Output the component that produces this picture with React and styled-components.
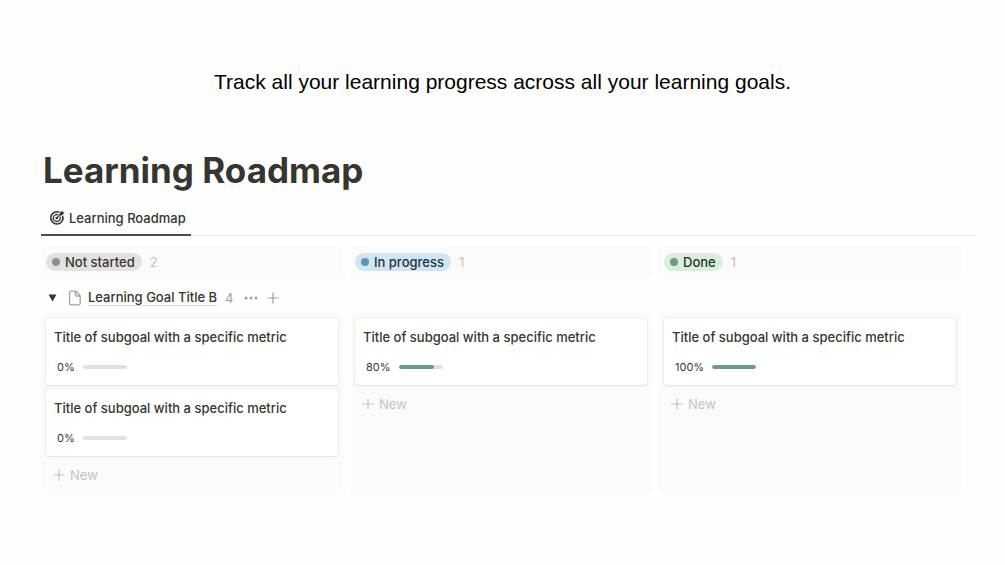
import React from "react";
import styled, { createGlobalStyle } from "styled-components";

const theme = {
  ink: "#37352f",
  muted: "#a3a29f",
  faint: "#c4c3c1",
  track: "#e3e2e0",
  column: "#fbfbfa",
  green: "#6c9b7d",
};

const GlobalStyle = createGlobalStyle`
* { box-sizing:border-box; }
body {
  margin:0;
  background:#fefefe;
  color:${theme.ink};
  font-family:Inter, "Liberation Sans", sans-serif;
  font-size:13px;
  line-height:20px;
}
button {
  font:inherit;
  color:inherit;
  background:none;
  border:0;
  padding:0;
  cursor:pointer;
}
`;

const Page = styled.main`
padding:66px 29px 66px 41px;
`;

const Intro = styled.p`
margin:0 0 50px;
padding-right:12px;
font-family:"Liberation Sans", Arial, sans-serif;
font-size:21px;
line-height:32px;
text-align:center;
color:#000;
`;

const Title = styled.h1`
margin:0 0 9px;
padding-left:2px;
font-size:35px;
line-height:44px;
font-weight:700;
`;

const Tabs = styled.div`
display:flex;
height:35px;
margin-bottom:10px;
border-bottom:1px solid #ececeb;
`;

const Tab = styled.button`
display:flex;
align-items:center;
gap:4px;
height:35px;
padding:0 5px 0 8px;
border-bottom:2px solid #4d4b44;
font-weight:500;
`;

const Board = styled.div`
padding-right:15px;
`;

const Columns = styled.div`
display:grid;
grid-template-columns:repeat(3, 1fr);
gap:7px;
`;

const ColumnHeader = styled.div`
display:flex;
align-items:center;
gap:8px;
height:32px;
padding:0 5px;
background:${theme.column};
border-radius:3px;
color:${theme.faint};
`;

const Status = styled.h2`
display:flex;
align-items:center;
gap:5px;
height:18px;
margin:0;
padding:0 7px 0 6px;
border-radius:9px;
font-size:13px;
line-height:18px;
font-weight:500;
background:${(props) => props.$background};
color:${(props) => props.$color};

&::before{
  content:"";
  width:8px;
  height:8px;
  border-radius:50%;
  background:${(props) => props.$dot};
}
`;

const Group = styled.div`
display:flex;
align-items:center;
height:35px;
padding:4px 7px 0;
color:${theme.muted};
`;

const GroupLink = styled.a`
margin:0 8px 0 5px;
border-bottom:1px solid #dcdbd9;
color:${theme.ink};
font-weight:500;
line-height:16px;
text-decoration:none;
`;

const IconButton = styled.button`
display:flex;
margin-left:${(props) => props.$space}px;
`;

const Toggle = styled(IconButton)`
margin-right:10px;
color:${theme.ink};
`;

const Column = styled.section`
display:flex;
flex-direction:column;
padding:5px 5px 0;
background:${theme.column};
`;

const Card = styled.article`
padding:9px 8px 8px;
margin-bottom:4px;
background:#fff;
border-radius:3px;
box-shadow:0 0 0 1px rgba(15, 15, 15, 0.04), 0 1px 3px rgba(15, 15, 15, 0.08);

&:last-of-type{
  margin-bottom:0;
}
`;

const CardTitle = styled.h3`
margin:0 0 10px;
font-size:13px;
line-height:20px;
font-weight:500;
`;

const Progress = styled.div`
display:flex;
align-items:center;
gap:8px;
padding-left:3px;
font-size:11px;
line-height:20px;
`;

const Track = styled.div`
width:44px;
height:4px;
border-radius:2px;
background:${theme.track};
overflow:hidden;
`;

const Fill = styled.div`
height:100%;
border-radius:2px;
background:${theme.green};
`;

const NewButton = styled.button`
display:flex;
align-items:center;
gap:5px;
height:37px;
padding:0 7px;
color:${theme.faint};
`;

const columns = [
  { name: "Not started", background: "#e3e2e0", color: "#37352f", dot: "#91918e", cards: [0, 0] },
  { name: "In progress", background: "#d3e5ef", color: "#183347", dot: "#5b97bd", cards: [80] },
  { name: "Done", background: "#dbeddb", color: "#1c3829", dot: "#6c9b7d", cards: [100] },
];

function TargetIcon() {
  return <svg width="16" height="16" viewBox="0 0 16 16" fill="none" stroke="currentColor" aria-hidden="true">
    <path d="M10.4 2.3A6.1 6.1 0 1 0 13.6 5.7" strokeWidth="1.6" />
    <path d="M9.2 4.8A3.5 3.5 0 1 0 11.1 6.8" strokeWidth="1.3" />
    <circle cx="7.8" cy="8.1" r="1.3" fill="currentColor" stroke="none" />
    <path d="M7.8 8.1L12.2 3.8" strokeWidth="1.3" />
    <path d="M11 3.2L13.2 1V2.8H15L12.8 5H11Z" fill="currentColor" strokeWidth="0.8" />
  </svg>
}

function PageIcon() {
  return <svg width="16" height="16" viewBox="0 0 16 16" fill="none" stroke="currentColor" strokeWidth="1.3" strokeLinejoin="round" aria-hidden="true">
    <path d="M4 1.2H8.6L13.2 5.8V13.3Q13.2 14.8 11.7 14.8H4Q2.6 14.8 2.6 13.3V2.7Q2.6 1.2 4 1.2Z" />
    <path d="M8.4 1.4V4.8Q8.4 6 9.6 6H13" />
  </svg>
}

function PlusIcon() {
  return <svg width="12" height="12" viewBox="0 0 12 12" fill="none" stroke="currentColor" strokeWidth="1.2" aria-hidden="true">
    <path d="M6 0.5V11.5M0.5 6H11.5" />
  </svg>
}

function GoalCard({ value }) {
  return <Card>
    <CardTitle>Title of subgoal with a specific metric</CardTitle>
    <Progress>
      <span>{value}%</span>
      <Track role="progressbar" aria-label="Progress" aria-valuenow={value}>
        <Fill style={{ width: `${value}%` }} />
      </Track>
    </Progress>
  </Card>
}

export default function App() {
  return <>
    <GlobalStyle />
    <Page>
      <Intro>Track all your learning progress across all your learning goals.</Intro>
      <Title>Learning Roadmap</Title>
      <Tabs>
        <Tab type="button"><TargetIcon />Learning Roadmap</Tab>
      </Tabs>
      <Board>
        <Columns>
          {columns.map((column) => <ColumnHeader key={column.name}>
            <Status $background={column.background} $color={column.color} $dot={column.dot}>{column.name}</Status>
            <span>{column.cards.length}</span>
          </ColumnHeader>)}
        </Columns>
        <Group>
          <Toggle type="button" $space={0} aria-label="Collapse group">
            <svg width="9" height="8" viewBox="0 0 9 8" fill="currentColor"><path d="M0.5 0.5H8.5L4.5 7.5Z" /></svg>
          </Toggle>
          <PageIcon />
          <GroupLink href="#goal">Learning Goal Title B</GroupLink>
          <span>4</span>
          <IconButton type="button" $space={11} aria-label="More">
            <svg width="14" height="4" viewBox="0 0 14 4" fill="currentColor">
              <circle cx="2" cy="2" r="1.5" /><circle cx="7" cy="2" r="1.5" /><circle cx="12" cy="2" r="1.5" />
            </svg>
          </IconButton>
          <IconButton type="button" $space={9} aria-label="Add"><PlusIcon /></IconButton>
        </Group>
        <Columns>
          {columns.map((column) => <Column key={column.name}>
            {column.cards.map((value, i) => <GoalCard key={i} value={value} />)}
            <NewButton type="button"><PlusIcon />New</NewButton>
          </Column>)}
        </Columns>
      </Board>
    </Page>
  </>
}
